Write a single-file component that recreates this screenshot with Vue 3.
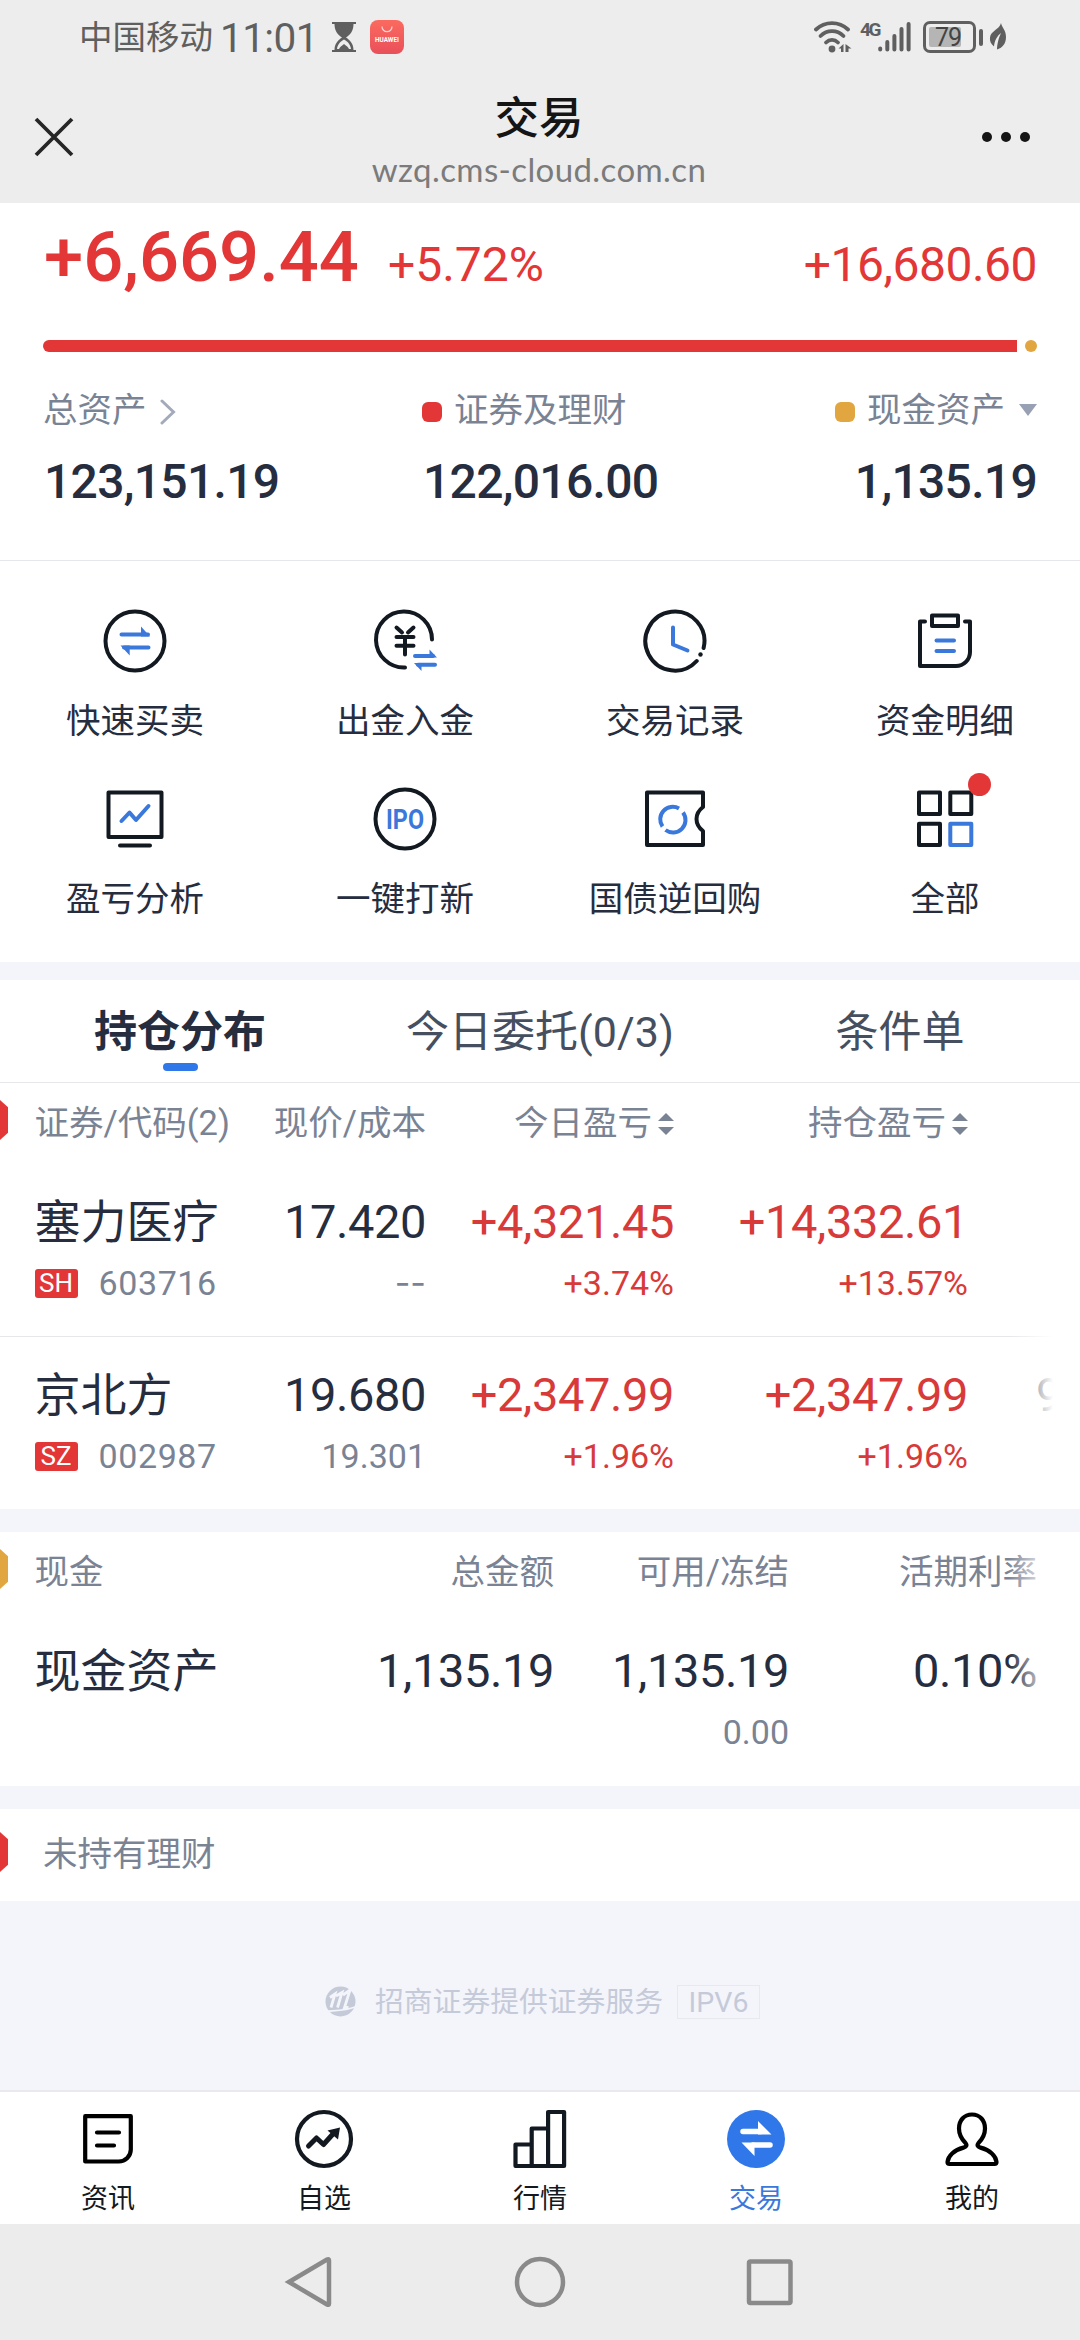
<template>
  <div class="screen">
    <div class="status-bar">
      <span class="carrier">中国移动</span>
      <span class="clock">11:01</span>
      <svg class="hourglass" width="24" height="32" viewBox="0 0 24 32">
        <path d="M0 1h24v2h-2.500c0 7-3.500 11-7.500 13.500C18 19 21.500 23 21.500 29H24v2H0v-2h2.500C2.500 23 6 19 10 16.500 6 14 2.500 10 2.500 3H0z" fill="#5f5f5f" />
        <path d="M12 18.500c-4.500 2.500-6.500 5.500-7 9.500h2c1-2.500 3-3 5-5 2 2 4 2.500 5 5h2c-.5-4-2.500-7-7-9.500z" fill="#ececec" />
      </svg>
      <div class="huawei">
        <svg width="12" height="8" viewBox="0 0 12 8">
          <path d="M1 0.500a5 5.200 0 0 0 10 0" fill="none" stroke="#ffd0cc" stroke-width="1.300" />
        </svg>
        <span>HUAWEI</span>
      </div>
      <div class="status-right">
        <svg width="38" height="34" viewBox="0 0 38 34">
          <g fill="none" stroke="#5f5f5f" stroke-width="3.800" stroke-linecap="round">
            <path d="M2 9.500C11 1 25 1 34 9.500" />
            <path d="M6.500 16c6.500-6.500 16.500-6.500 23 0" />
            <path d="M12 22.500c3.500-3.500 8.500-3.500 12 0" />
          </g>
          <circle cx="18" cy="29" r="3.400" fill="#5f5f5f" />
          <path d="M24.500 28.500l5-4.500v8h-2.500v-3.500zM31.500 24l6 4.500h-3v3.500h-3z" fill="#5f5f5f" />
        </svg>
        <span class="net">4G</span>
        <svg width="34" height="34" viewBox="0 0 34 34">
          <g stroke="#5f5f5f" stroke-width="4" stroke-linecap="round">
            <path d="M2.200 28.500v1M9.300 22v7.500M16.400 16v13.500M23.500 9v20.500M30.600 4v25.500" />
          </g>
        </svg>
        <div class="battery"><span>79</span></div>
        <div class="battery-tip"></div>
        <svg class="leaf" width="18" height="28" viewBox="0 0 18 28">
          <path d="M12 0c1 5 5 7 5 14 0 7-4 11-9 12.500C8 21 10 14 12 10 8 13 5.500 18 5 23.500 2 21 .5 18 1 14.500 1.500 8 11 6 12 0z" fill="#5f5f5f" />
        </svg>
      </div>
    </div>

    <header class="title-bar">
      <svg class="close" width="40" height="40" viewBox="0 0 40 40">
        <path d="M2 2L38 38M38 2L2 38" stroke="#262626" stroke-width="3.800" />
      </svg>
      <div class="titles">
        <h1>交易</h1>
        <p>wzq.cms-cloud.com.cn</p>
      </div>
      <div class="more"><i></i><i></i><i></i></div>
    </header>

    <section class="summary">
      <div class="profit">
        <span class="profit-total">+6,669.44</span>
        <span class="profit-rate">+5.72%</span>
        <span class="profit-hold">+16,680.60</span>
      </div>
      <div class="ratio">
        <div class="ratio-stock"></div>
        <div class="ratio-cash"></div>
      </div>
      <div class="assets">
        <div class="asset">
          <div class="asset-label">
            总资产
            <svg class="chevron" width="16" height="26" viewBox="0 0 16 26">
              <path d="M2 2l11.500 11L2 24" fill="none" stroke="#a3abbb" stroke-width="3" stroke-linecap="round" />
            </svg>
          </div>
          <div class="asset-value">123,151.19</div>
        </div>
        <div class="asset middle">
          <div class="asset-label"><i class="dot red"></i>证券及理财</div>
          <div class="asset-value">122,016.00</div>
        </div>
        <div class="asset last">
          <div class="asset-label"><i class="dot gold"></i>现金资产<i class="caret"></i></div>
          <div class="asset-value">1,135.19</div>
        </div>
      </div>
    </section>

    <section class="menu">
      <div v-for="item in menus" :key="item.icon" class="menu-item">
        <svg class="menu-icon" width="70" height="70" viewBox="0 0 70 70">
          <g fill="none" stroke="#131920" stroke-width="4" stroke-linecap="round" stroke-linejoin="round">
            <template v-if="item.icon === 'swap'">
              <circle cx="35" cy="35" r="29.500" />
              <path d="M21.500 28.500H48M48.500 41.500H24" stroke="#3a78dc" />
              <path d="M41 20.500l9 10h-9zM20.500 39.500h9.200v10z" fill="#3a78dc" stroke="none" />
            </template>
            <template v-else-if="item.icon === 'yuan'">
              <path d="M62 33.500A28 28 0 1 0 35 61.500" />
              <path d="M26.500 21.500l5.500 5M43.500 21.500l-5.500 5M26.500 31h17M26.500 39.800h17M35 31v17.500" />
              <path d="M45 50h18M65 58.700H48" stroke="#3a78dc" />
              <path d="M59.500 43.500l7.500 8h-7.500zM44 57h7.500v8z" fill="#3a78dc" stroke="none" />
            </template>
            <template v-else-if="item.icon === 'clock'">
              <path d="M63.600 42A29.500 29.500 0 1 0 56.700 55" />
              <circle cx="60.500" cy="48.500" r="2.200" fill="#131920" stroke="none" />
              <path d="M33 21.500v17l14.500 6" stroke="#3a78dc" />
            </template>
            <template v-else-if="item.icon === 'bill'">
              <path d="M15 15.500H10V60H46a14 14 0 0 0 14-14V15.500H55" />
              <path d="M22 9.500h26v10.500H22z" />
              <path d="M26.500 34.500h17.500M26.500 45h17.500" stroke="#3a78dc" />
            </template>
            <template v-else-if="item.icon === 'chart'">
              <path d="M8.500 8.500h53V53h-53zM20 61.500h30" />
              <path d="M21.500 37l8-8.500 6.500 7.500L48.500 22" stroke="#3a78dc" />
            </template>
            <template v-else-if="item.icon === 'ipo'">
              <circle cx="35" cy="35" r="29.500" />
              <text class="ipo" x="16" y="45" textLength="38" lengthAdjust="spacingAndGlyphs">IPO</text>
            </template>
            <template v-else-if="item.icon === 'bond'">
              <path d="M7 8.500H63V23q-6.500 5-6.500 12t6.500 12V61H7z" />
              <g stroke="#3a78dc" stroke-linecap="butt">
                <path d="M39 24.500A12.500 12.500 0 0 0 22.500 42.500" />
                <path d="M43 28.500A12.500 12.500 0 0 1 25.500 46" />
              </g>
            </template>
            <template v-else>
              <path d="M9 8.500h21V30H9zM40.300 8.500h21V30h-21zM9 39.800h21V61H9z" />
              <path d="M40.300 39.800h21V61h-21z" stroke="#3a78dc" />
            </template>
          </g>
        </svg>
        <i v-if="item.badge" class="badge"></i>
        <span>{{ item.label }}</span>
      </div>
    </section>

    <nav class="tabs">
      <div
        v-for="(tab, index) in tabs"
        :key="tab"
        class="tab"
        :class="{ active: activeTab === index }"
        @click="activeTab = index"
      >
        {{ tab }}
      </div>
    </nav>

    <section class="holdings">
      <i class="tag red"></i>
      <div class="row head">
        <div class="left">证券/代码(2)</div>
        <div>现价/成本</div>
        <div>今日盈亏<i class="sort"></i></div>
        <div>持仓盈亏<i class="sort"></i></div>
      </div>
      <div v-for="stock in stocks" :key="stock.code" class="row stock">
        <div class="left">
          <div class="main">{{ stock.name }}</div>
          <div class="sub"><b class="market">{{ stock.market }}</b>{{ stock.code }}</div>
        </div>
        <div>
          <div class="main num">{{ stock.price }}</div>
          <div class="sub" :class="{ empty: stock.cost === '--' }">{{ stock.cost }}</div>
        </div>
        <div class="up">
          <div class="main num">{{ stock.today }}</div>
          <div class="sub">{{ stock.todayRate }}</div>
        </div>
        <div class="up">
          <div class="main num">{{ stock.hold }}</div>
          <div class="sub">{{ stock.holdRate }}</div>
        </div>
        <div class="next">
          <div class="main num">{{ stock.next }}</div>
        </div>
      </div>
      <div class="fade"></div>
    </section>

    <section class="cash">
      <i class="tag gold"></i>
      <div class="cash-row head">
        <div class="left">现金</div>
        <div>总金额</div>
        <div>可用/冻结</div>
        <div>活期利率</div>
      </div>
      <div class="cash-row">
        <div class="left main">现金资产</div>
        <div class="main num">1,135.19</div>
        <div>
          <div class="main num">1,135.19</div>
          <div class="sub">0.00</div>
        </div>
        <div class="main num">0.10%</div>
      </div>
      <div class="fade"></div>
    </section>

    <section class="wealth">
      <i class="tag red"></i>
      未持有理财
    </section>

    <footer class="provider">
      <svg width="31" height="31" viewBox="0 0 31 31">
        <circle cx="15.500" cy="15.500" r="15" fill="#c5cad9" />
        <g fill="none" stroke="#f4f5fa" stroke-width="2.800">
          <path d="M5 11.500l5-3.500-4 13.500M11 10l6-3.500-4.500 15M18 9l7-5-5.500 17.500h4" />
          <path d="M1 25.500c10-1 20-1 29-4.500" stroke-width="1.800" />
        </g>
      </svg>
      <span class="provider-name">招商证券提供证券服务</span>
      <span class="ipv6">IPV6</span>
    </footer>

    <nav class="bottom-nav">
      <div v-for="item in navs" :key="item.icon" class="nav-item" :class="{ current: item.current }">
        <svg width="60" height="60" viewBox="0 0 60 60">
          <g fill="none" stroke="#131920" stroke-width="4.200" stroke-linecap="round" stroke-linejoin="round">
            <template v-if="item.icon === 'news'">
              <path d="M7.200 7.200h45.600V40.500a12 12 0 0 1-12 12H7.200z" stroke="#000" />
              <path d="M19 23.500h22M19 36.500h17" stroke="#000" />
            </template>
            <template v-else-if="item.icon === 'pick'">
              <circle cx="30" cy="30" r="27" />
              <path d="M14.500 37l8-8 7 6.500 9-10" stroke-width="5" />
              <path d="M33.500 21.500l12.500-3-2 12z" fill="#131920" stroke="none" />
            </template>
            <template v-else-if="item.icon === 'market'">
              <path d="M5.500 35.500h16.200V57H5.500zM21.700 19.500h16.400V57H21.700zM38.100 3h16v54h-16z" />
            </template>
            <template v-else-if="item.icon === 'trade'">
              <circle cx="30" cy="30" r="29" fill="#3078ea" stroke="none" />
              <path d="M17 22.500h18M44 36H27" stroke="#fff" stroke-width="5.500" />
              <path d="M32 12l13.500 13.500H32zM15.500 33.500h13v13.500z" fill="#fff" stroke="none" />
            </template>
            <template v-else>
              <path
                d="M30 5.500c-8 0-13 6-13 14 0 7 3 11 6.500 14.500 2 2.500.5 4-2 4.600C12 41 6 47 5.500 53q0 2 2 2h45q2 0 2-2c-.5-6-6.500-12-16-14.400-2.500-.6-4-2.100-2-4.600C40 30.500 43 26.500 43 19.500c0-8-5-14-13-14z"
                stroke="#000"
              />
            </template>
          </g>
        </svg>
        <span>{{ item.label }}</span>
      </div>
    </nav>

    <div class="system-nav">
      <svg width="50" height="54" viewBox="0 0 50 54">
        <path d="M5 27L43 4.500q2-1 2 1V48.500q0 2-2 1z" />
      </svg>
      <svg width="54" height="54" viewBox="0 0 54 54"><circle cx="27" cy="27" r="23" /></svg>
      <svg width="50" height="54" viewBox="0 0 50 54">
        <rect x="3" y="6.500" width="41.500" height="41.500" rx="1.500" />
      </svg>
    </div>
  </div>
</template>

<script setup>
import { ref } from "vue";

const activeTab = ref(0);

const menus = [
  { icon: "swap", label: "快速买卖" },
  { icon: "yuan", label: "出金入金" },
  { icon: "clock", label: "交易记录" },
  { icon: "bill", label: "资金明细" },
  { icon: "chart", label: "盈亏分析" },
  { icon: "ipo", label: "一键打新" },
  { icon: "bond", label: "国债逆回购" },
  { icon: "all", label: "全部", badge: true },
];

const tabs = ["持仓分布", "今日委托(0/3)", "条件单"];

const stocks = [
  {
    name: "塞力医疗",
    market: "SH",
    code: "603716",
    price: "17.420",
    cost: "--",
    today: "+4,321.45",
    todayRate: "+3.74%",
    hold: "+14,332.61",
    holdRate: "+13.57%",
    next: "",
  },
  {
    name: "京北方",
    market: "SZ",
    code: "002987",
    price: "19.680",
    cost: "19.301",
    today: "+2,347.99",
    todayRate: "+1.96%",
    hold: "+2,347.99",
    holdRate: "+1.96%",
    next: "9",
  },
];

const navs = [
  { icon: "news", label: "资讯" },
  { icon: "pick", label: "自选" },
  { icon: "market", label: "行情" },
  { icon: "trade", label: "交易", current: true },
  { icon: "mine", label: "我的" },
];
</script>

<style>
body {
  margin: 0;
}
</style>

<style scoped>
.screen {
  width: 1080px;
  height: 2340px;
  overflow: hidden;
  display: flex;
  flex-direction: column;
  background: #f4f5fa;
  color: #252d3f;
  font-family: Roboto, "Noto Sans CJK SC", sans-serif;
  font-size: 34.5px;
}

.screen * {
  box-sizing: border-box;
}

i {
  font-style: normal;
}

svg {
  flex: none;
  display: block;
}

/* status bar */
.status-bar {
  height: 74px;
  padding: 0 73px 0 79px;
  display: flex;
  align-items: center;
  background: #ededed;
  color: #5f5f5f;
}

.carrier {
  padding-top: 2px;
  font-size: 33.5px;
  line-height: 40px;
}

.clock {
  margin-left: 7px;
  width: 98px;
  font-size: 40.5px;
  line-height: 44px;
  letter-spacing: -0.6px;
  padding-top: 2px;
}

.hourglass {
  margin-left: 14px;
}

.huawei {
  margin-left: 14px;
  width: 34px;
  height: 34px;
  border-radius: 8px;
  background: linear-gradient(#fb6a5f, #e9505a);
  display: flex;
  flex-direction: column;
  align-items: center;
  padding-top: 6px;
}

.huawei span {
  color: #fff;
  font-size: 6.4px;
  font-weight: 700;
  line-height: 12px;
}

.status-right {
  margin-left: auto;
  display: flex;
  align-items: center;
}

.net {
  align-self: flex-start;
  margin-left: 8px;
  width: 18px;
  font-size: 19px;
  font-weight: 700;
  line-height: 20px;
  letter-spacing: -2.5px;
}

.battery {
  margin-left: 11px;
  width: 53px;
  height: 32px;
  border: 3px solid #5f5f5f;
  border-radius: 7px;
  padding: 3px 0 0 3px;
}

.battery span {
  display: block;
  width: 32px;
  height: 20px;
  border-radius: 2px;
  background: #b5b5b5;
  color: #444;
  text-align: right;
  font-size: 25px;
  line-height: 21px;
  letter-spacing: -1px;
}

.battery-tip {
  margin-left: 3px;
  width: 4px;
  height: 17px;
  border-radius: 2px;
  background: #5f5f5f;
}

.leaf {
  margin-left: 6px;
}

/* title bar */
.title-bar {
  height: 129px;
  padding: 0 50px 0 34px;
  display: flex;
  justify-content: space-between;
  background: #ededed;
}

.close {
  margin-top: 43px;
}

.titles {
  padding-left: 22px;
  text-align: center;
}

.titles h1 {
  margin: 18px 0 0;
  color: #151515;
  font-size: 44.5px;
  font-weight: 500;
  line-height: 54px;
}

.titles p {
  margin: 3px 0 0;
  color: #7b7b7b;
  font-family: Lato, sans-serif;
  font-size: 33px;
  line-height: 40px;
  letter-spacing: 0.4px;
}

.more {
  margin-top: 58px;
  display: flex;
  gap: 9px;
}

.more i {
  width: 10px;
  height: 10px;
  border-radius: 50%;
  background: #151515;
}

/* account summary */
.summary {
  height: 358px;
  padding: 19px 43px 0;
  border-bottom: 1px solid #e6e7ea;
  background: #fff;
}

.profit {
  height: 80px;
  display: flex;
  align-items: baseline;
  color: #e33636;
  line-height: 70px;
  font-weight: 500;
}

.profit-total {
  width: 345px;
  padding-left: 1px;
  font-size: 70.5px;
}

.profit-rate,
.profit-hold {
  font-size: 48px;
  font-weight: 400;
}

.profit-hold {
  margin-left: auto;
  letter-spacing: -0.5px;
}

.ratio {
  margin-top: 38px;
  display: flex;
  gap: 8px;
}

.ratio-stock {
  width: 974px;
  height: 12px;
  border-radius: 6px 0 0 6px;
  background: #e33636;
}

.ratio-cash {
  width: 12px;
  height: 12px;
  border-radius: 50%;
  background: #e1a63f;
}

.assets {
  margin-top: 38px;
  display: flex;
}

.asset {
  width: 379px;
}

.asset.middle {
  width: 300px;
}

.asset.last {
  width: auto;
  margin-left: auto;
  text-align: right;
}

.asset-label {
  height: 40px;
  display: flex;
  align-items: center;
  color: #7a8394;
  line-height: 40px;
  white-space: nowrap;
}

.chevron {
  margin-left: 13px;
  margin-top: 3px;
}

.dot {
  width: 20px;
  height: 20px;
  margin: 3px 12px 0 0;
  border-radius: 6px;
}

.red {
  background: #e33636;
}

.gold {
  background: #e1a63f;
}

.caret {
  margin-left: 14px;
  border: 9px solid transparent;
  border-top: 12px solid #98a1b3;
  border-bottom: 0;
}

.asset-value {
  margin-top: 27px;
  padding-left: 1px;
  font-size: 48px;
  font-weight: 500;
  line-height: 50px;
  letter-spacing: -0.7px;
}

/* quick menu */
.menu {
  height: 401px;
  padding-top: 45px;
  display: grid;
  grid-template-columns: repeat(4, 1fr);
  grid-auto-rows: 178px;
  background: #fff;
}

.menu-item {
  position: relative;
  display: flex;
  flex-direction: column;
  align-items: center;
}

.menu-item span {
  margin-top: 25px;
  line-height: 40px;
}

.badge {
  position: absolute;
  top: -11px;
  right: 89px;
  width: 23px;
  height: 23px;
  border-radius: 50%;
  background: #e33636;
}

.ipo {
  fill: #3a78dc;
  stroke: none;
  font-size: 28px;
  font-weight: 700;
}

/* tabs */
.tabs {
  margin-top: 18px;
  height: 103px;
  display: flex;
  border-bottom: 1px solid #e6e7ea;
  background: #fff;
}

.tab {
  position: relative;
  flex: 1;
  text-align: center;
  color: #454f60;
  font-size: 43px;
  line-height: 105px;
}

.tab.active {
  color: #252d3f;
  font-weight: 700;
}

.tab.active::after {
  content: "";
  position: absolute;
  left: 163px;
  bottom: 11px;
  width: 35px;
  height: 8px;
  border-radius: 4px;
  background: #3078ea;
}

/* tables */
.holdings,
.cash,
.wealth {
  position: relative;
  background: #fff;
  overflow: hidden;
}

.tag {
  position: absolute;
  left: 0;
  top: 17px;
  width: 8px;
  height: 40px;
  clip-path: polygon(0 0, 100% 18%, 100% 82%, 0 100%);
}

.holdings {
  height: 426px;
}

.row {
  width: 1053px;
  padding-left: 35px;
  display: grid;
  grid-template-columns: 200px 191px 248px 294px 85px;
  text-align: right;
  overflow: hidden;
  white-space: nowrap;
}

.left {
  text-align: left;
}

.head {
  color: #7a8394;
  line-height: 40px;
}

.row.head {
  height: 80px;
  padding-top: 20px;
}

.sort {
  position: relative;
  display: inline-block;
  margin-left: 6px;
  width: 16px;
  height: 22px;
}

.sort::before,
.sort::after {
  content: "";
  position: absolute;
  left: 0;
  border: 8px solid transparent;
}

.sort::before {
  top: 0;
  border-top: 0;
  border-bottom: 8px solid #7a8394;
}

.sort::after {
  bottom: 0;
  border-bottom: 0;
  border-top: 8px solid #7a8394;
}

.stock {
  height: 173px;
  padding-top: 29px;
}

.stock + .stock {
  padding-top: 28px;
  border-top: 1px solid #e6e7ea;
}

.main {
  font-size: 46px;
  line-height: 60px;
}

.main.num {
  font-size: 47px;
  letter-spacing: -0.4px;
}

.sub {
  margin-top: 11px;
  display: flex;
  align-items: center;
  justify-content: flex-end;
  height: 40px;
  color: #7a8394;
  font-size: 34px;
  line-height: 40px;
}

.sub.empty {
  font-family: Inter, sans-serif;
}

.left .sub {
  justify-content: flex-start;
  letter-spacing: 0.6px;
}

.up,
.up .sub {
  color: #d83a3a;
}

.market {
  width: 43px;
  height: 29px;
  margin-right: 21px;
  border-radius: 3px;
  background: #e33636;
  color: #fff;
  font-size: 26px;
  font-weight: 400;
  line-height: 29px;
  text-align: center;
  letter-spacing: 0;
}

.next {
  padding-left: 68px;
  text-align: left;
}

.fade {
  position: absolute;
  right: 27px;
  top: 0;
  width: 45px;
  height: 100%;
  background: linear-gradient(to right, rgba(255, 255, 255, 0), #fff);
}

.cash {
  margin-top: 23px;
  height: 254px;
}

.cash-row {
  padding-left: 35px;
  display: grid;
  grid-template-columns: 251px 268px 235px 248px;
  text-align: right;
}

.cash .cash-row.head {
  height: 109px;
  padding-top: 20px;
}

.left {
  margin-left: -0.5px;
}

.wealth {
  margin-top: 23px;
  height: 92px;
  padding-left: 43px;
  color: #7a8394;
  line-height: 91px;
}

.wealth .tag {
  top: 23px;
}

/* provider */
.provider {
  height: 189px;
  padding: 12px 0 0 325px;
  display: flex;
  align-items: center;
  color: #c5cad9;
}

.provider-name {
  margin-left: 19px;
  width: 287px;
  font-size: 28.8px;
  line-height: 36px;
  white-space: nowrap;
}

.ipv6 {
  margin-left: 15px;
  width: 83px;
  height: 34px;
  border: 1px solid #e6e9f0;
  text-align: center;
  font-size: 28.5px;
  line-height: 33px;
}

/* bottom navigation */
.bottom-nav {
  height: 134px;
  padding-top: 17px;
  display: flex;
  border-top: 2px solid #e9e9ee;
  background: #fff;
}

.nav-item {
  flex: 1;
  display: flex;
  flex-direction: column;
  align-items: center;
  color: #131920;
  font-size: 27px;
}

.nav-item span {
  margin-top: 14px;
  line-height: 32px;
}

.nav-item.current {
  color: #3a78dc;
}

.system-nav {
  height: 116px;
  padding-left: 284px;
  display: flex;
  align-items: center;
  gap: 179px;
  background: #ececec;
}

.system-nav svg {
  fill: none;
  stroke: #8a8a8a;
  stroke-width: 4.5;
}
</style>
